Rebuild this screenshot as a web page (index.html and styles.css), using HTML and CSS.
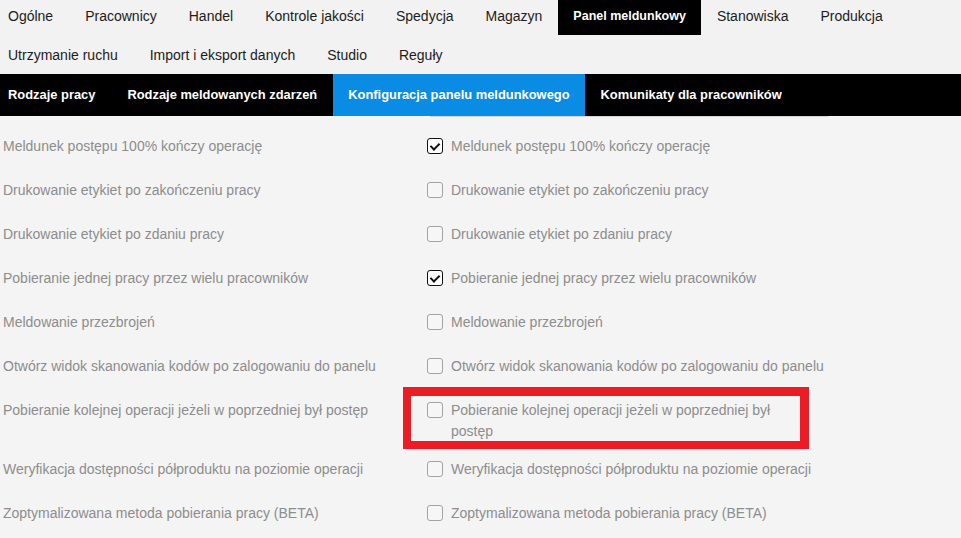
FILE: index.html
```html
<!DOCTYPE html>
<html lang="pl">
<head>
<meta charset="utf-8">
<title>Panel meldunkowy</title>
<link rel="stylesheet" href="styles.css">
</head>
<body>
<nav class="main-nav">
  <a class="tab">Ogólne</a>
  <a class="tab">Pracownicy</a>
  <a class="tab">Handel</a>
  <a class="tab">Kontrole jakości</a>
  <a class="tab">Spedycja</a>
  <a class="tab">Magazyn</a>
  <a class="tab active">Panel meldunkowy</a>
  <a class="tab">Stanowiska</a>
  <a class="tab">Produkcja</a>
  <a class="tab first">Utrzymanie ruchu</a>
  <a class="tab">Import i eksport danych</a>
  <a class="tab">Studio</a>
  <a class="tab">Reguły</a>
</nav>
<nav class="sub-nav">
  <a class="sub">Rodzaje pracy</a>
  <a class="sub">Rodzaje meldowanych zdarzeń</a>
  <a class="sub active">Konfiguracja panelu meldunkowego</a>
  <a class="sub">Komunikaty dla pracowników</a>
</nav>
<main class="content">
  <div class="ghost-select"></div>
  <div class="row">
    <div class="label">Meldunek postępu 100% kończy operację</div>
    <label class="field"><span class="box checked"></span><span class="text">Meldunek postępu 100% kończy operację</span></label>
  </div>
  <div class="row">
    <div class="label">Drukowanie etykiet po zakończeniu pracy</div>
    <label class="field"><span class="box"></span><span class="text">Drukowanie etykiet po zakończeniu pracy</span></label>
  </div>
  <div class="row">
    <div class="label">Drukowanie etykiet po zdaniu pracy</div>
    <label class="field"><span class="box"></span><span class="text">Drukowanie etykiet po zdaniu pracy</span></label>
  </div>
  <div class="row">
    <div class="label">Pobieranie jednej pracy przez wielu pracowników</div>
    <label class="field"><span class="box checked"></span><span class="text">Pobieranie jednej pracy przez wielu pracowników</span></label>
  </div>
  <div class="row">
    <div class="label">Meldowanie przezbrojeń</div>
    <label class="field"><span class="box"></span><span class="text">Meldowanie przezbrojeń</span></label>
  </div>
  <div class="row">
    <div class="label">Otwórz widok skanowania kodów po zalogowaniu do panelu</div>
    <label class="field"><span class="box"></span><span class="text">Otwórz widok skanowania kodów po zalogowaniu do panelu</span></label>
  </div>
  <div class="row">
    <div class="label">Pobieranie kolejnej operacji jeżeli w poprzedniej był postęp</div>
    <label class="field highlighted"><span class="box"></span><span class="text">Pobieranie kolejnej operacji jeżeli w poprzedniej był postęp</span></label>
  </div>
  <div class="row">
    <div class="label">Weryfikacja dostępności półproduktu na poziomie operacji</div>
    <label class="field"><span class="box"></span><span class="text">Weryfikacja dostępności półproduktu na poziomie operacji</span></label>
  </div>
  <div class="row">
    <div class="label">Zoptymalizowana metoda pobierania pracy (BETA)</div>
    <label class="field"><span class="box"></span><span class="text">Zoptymalizowana metoda pobierania pracy (BETA)</span></label>
  </div>
</main>
</body>
</html>
```
FILE: styles.css
```css
* { box-sizing: border-box; }
html, body {
  margin: 0;
  padding: 0;
  background: #f4f4f4;
  font-family: "Liberation Sans", Arial, sans-serif;
  overflow: hidden;
}
.main-nav {
  display: flex;
  flex-wrap: wrap;
  row-gap: 4px;
  background: #f2f2f2;
  width: 961px;
}
.tab {
  display: flex;
  align-items: center;
  height: 35px;
  padding: 0 16px 4px;
  font-size: 14px;
  color: #1c1c1c;
}
.tab:first-child, .tab.first { padding-left: 8px; }
.tab.active {
  background: #000;
  color: #fff;
  font-weight: bold;
  font-size: 12.5px;
  padding: 0 15px 4px;
}
.sub-nav {
  display: flex;
  background: #000;
  height: 42px;
}
.sub {
  display: flex;
  align-items: center;
  padding: 0 16px 1px;
  color: #fff;
  font-size: 12.9px;
  font-weight: bold;
}
.sub:first-child { padding-left: 8px; }
.sub.active { background: #0a8be4; padding: 0 15px 1px; }
.content {
  padding: 0 0 0 3px;
}
.ghost-select {
  margin-left: 427px;
  width: 398px;
  height: 1px;
  border: 1px solid #d4d4d4;
  border-top: none;
  border-radius: 0 0 3px 3px;
  margin-bottom: 7px;
}
.row {
  display: grid;
  grid-template-columns: 424px 408px;
  align-items: start;
  min-height: 44px;
  padding: 11.5px 0 5.5px;
  font-size: 14px;
  line-height: 21px;
  color: #8d8d8d;
}
.field {
  position: relative;
  display: flex;
  align-items: flex-start;
  gap: 8px;
}
.box {
  flex: none;
  width: 16px;
  height: 16px;
  margin-top: 2.5px;
  border: 1.5px solid #a3a3a3;
  border-radius: 3px;
  background: #f6f6f6;
  position: relative;
}
.box.checked {
  border-color: #111;
  background: #fff;
}
.box.checked::after {
  content: "";
  position: absolute;
  left: 4px;
  top: 1.5px;
  width: 4px;
  height: 7px;
  border: solid #111;
  border-width: 0 2px 2px 0;
  transform: rotate(45deg);
}
.highlighted .text { max-width: 340px; }
.highlighted::after {
  content: "";
  box-sizing: border-box;
  position: absolute;
  left: -24px;
  top: -12.5px;
  width: 406px;
  height: 62px;
  border: solid #ec1c24;
  border-width: 9px 9px 8px 8px;
}
```
